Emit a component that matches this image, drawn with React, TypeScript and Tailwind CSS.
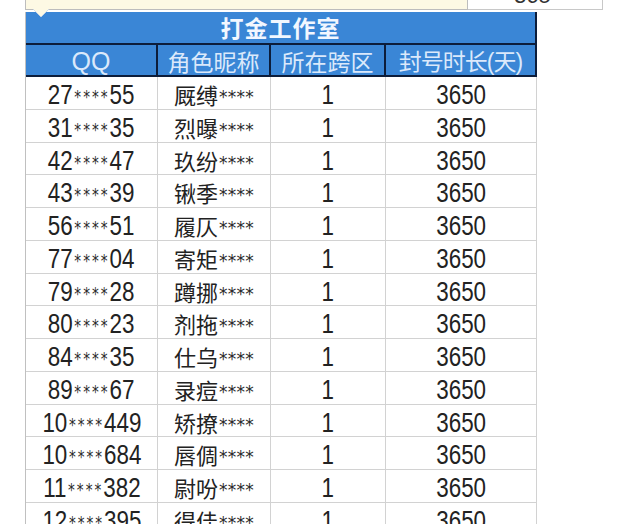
const rows = [
  ["27", "55", "厩缚"],
  ["31", "35", "烈曝"],
  ["42", "47", "玖纷"],
  ["43", "39", "锹季"],
  ["56", "51", "履仄"],
  ["77", "04", "寄矩"],
  ["79", "28", "蹲挪"],
  ["80", "23", "剂拖"],
  ["84", "35", "仕乌"],
  ["89", "67", "录痘"],
  ["10", "449", "矫撩"],
  ["10", "684", "唇倜"],
  ["11", "382", "尉吩"],
  ["12", "395", "得佳"],
];

const num = "font-['Liberation_Sans',sans-serif] text-[28px] leading-none text-[#222]";
const cjk = "font-['Noto_Sans_CJK_SC',sans-serif] text-[22px] leading-none text-[#222]";
const cell = "border-r border-[#d2d2d2] flex items-center justify-center pt-[4px]";
// 原图字体偏窄，整体横向压缩
const squeeze = "inline-flex items-baseline scale-x-[0.8]";

function Stars({ wide }: { wide?: boolean }) {
  return (
    <span
      className={
        wide
          ? "font-['DejaVu_Sans',sans-serif] text-[17px] leading-none text-[#2a2a2a] tracking-[2.5px] relative top-[-1px] pl-[2px]"
          : "font-['DejaVu_Sans',sans-serif] text-[17px] leading-none text-[#2a2a2a] tracking-[0.3px] relative top-[-1px] pl-[1px]"
      }
    >
      ****
    </span>
  );
}

export default function App() {
  return (
    <div className="w-[640px] h-[524px] bg-white overflow-hidden relative">
      {/* 批注框 + 右侧单元格 */}
      <div className="flex h-[12px] pl-[25px]">
        <div className="w-[443px] h-[10px] bg-[#fdf9e4] border-l border-b border-[#bdbdbd] border-r"></div>
        <div className="w-[135px] h-[10px] border-r border-b border-[#c8c8c8] relative overflow-hidden">
          <span className="absolute left-[46px] top-[-15px] font-['Liberation_Sans',sans-serif] text-[22px] leading-none text-[#333]">365</span>
        </div>
      </div>

      {/* 批注指向三角 */}
      <svg className="absolute left-[33px] top-[9px]" width="16" height="9" viewBox="0 0 16 9">
        <polygon points="0,0 16,0 8,8" fill="#fdf9e4" />
        <polyline points="0,0 8,8 16,0" fill="none" stroke="#c9d7e8" strokeWidth="0.8" />
      </svg>

      <div className="ml-[25px] w-[512px] border-l border-[#c0c0c0]">
        {/* 标题 */}
        <div className="h-[33px] bg-[#3a86d6] border-b-2 border-r-2 border-[#0c1d3b] flex items-center justify-center">
          <span className="font-['Noto_Sans_CJK_SC',sans-serif] font-bold text-[23px] leading-none text-[#f2f7ff] tracking-[1px]">
            打金工作室
          </span>
        </div>

        {/* 表头 */}
        <div className="grid grid-cols-[132px_113px_115px_151px] h-[32px] bg-[#3a86d6] border-b-2 border-[#0c1d3b]">
          <div className="border-r-2 border-[#0c1d3b] flex items-center justify-center pt-[2px]">
            <span className="font-['Liberation_Sans',sans-serif] text-[25px] leading-none text-[#dbe9fb]">QQ</span>
          </div>
          <div className="border-r-2 border-[#0c1d3b] flex items-center justify-center pt-[2px]">
            <span className="font-['Noto_Sans_CJK_SC',sans-serif] text-[23px] leading-none text-[#dbe9fb]">角色昵称</span>
          </div>
          <div className="border-r-2 border-[#0c1d3b] flex items-center justify-center pt-[2px]">
            <span className="font-['Noto_Sans_CJK_SC',sans-serif] text-[23px] leading-none text-[#dbe9fb]">所在跨区</span>
          </div>
          <div className="border-r-2 border-[#0c1d3b] flex items-center justify-center pt-[2px]">
            <span className="font-['Noto_Sans_CJK_SC',sans-serif] text-[23px] leading-none text-[#dbe9fb] tracking-[-1px]">
              封号时长<span className="font-['Liberation_Sans',sans-serif]">(</span>天<span className="font-['Liberation_Sans',sans-serif]">)</span>
            </span>
          </div>
        </div>

        {/* 数据行 */}
        {rows.map(([a, b, name], i) => (
          <div
            key={i}
            className="grid grid-cols-[132px_113px_115px_151px] h-[32.75px] border-b border-[#d2d2d2]"
          >
            <div className={cell}>
              <span className={squeeze}>
                <span className={num}>{a}</span>
                <Stars wide />
                <span className={num}>{b}</span>
              </span>
            </div>
            <div className={cell}>
              <span className="inline-flex items-baseline">
                <span className={cjk}>{name}</span>
                <Stars />
              </span>
            </div>
            <div className={cell}>
              <span className={squeeze}>
                <span className={num}>1</span>
              </span>
            </div>
            <div className={cell}>
              <span className={squeeze}>
                <span className={num}>3650</span>
              </span>
            </div>
          </div>
        ))}
      </div>
    </div>
  );
}
